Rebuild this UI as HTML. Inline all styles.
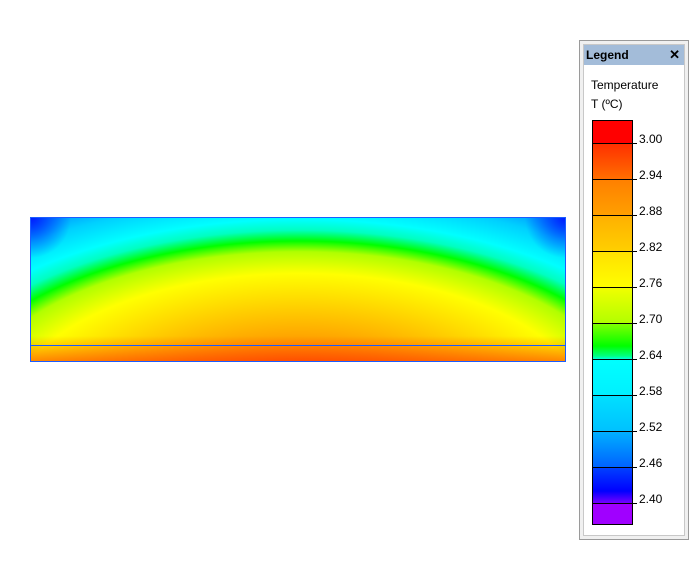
<!DOCTYPE html>
<html><head><style>
body{margin:0;width:694px;height:564px;background:#fff;position:relative;overflow:hidden;font-family:"Liberation Sans",sans-serif}
#plot{position:absolute;left:30px;top:217px;width:534px;height:143px;border:1px solid #1a5cff;
background:radial-gradient(circle 40px at 0 0,rgba(0,0,255,0.8),rgba(0,0,255,0)),radial-gradient(circle 40px at 534px 0,rgba(0,0,255,0.8),rgba(0,0,255,0)),linear-gradient(rgba(255,40,0,0) 0px,rgba(255,40,0,0) 118px,rgba(255,40,0,0.55) 143px),radial-gradient(ellipse 720px 360px at 268px 203px,#ff2000 0%,#ff5000 10%,#ff8800 18%,#ffb800 27%,#ffdc00 34%,#ffff00 41%,#b0ff00 47%,#00ff00 50%,#00ffc0 53%,#00ffff 56%,#00d0ff 62%,#0090ff 67%,#0020ff 72%,#2000ff 80%)}
#line{position:absolute;left:30px;top:345px;width:536px;height:1px;background:#1a5cff}
#panel{position:absolute;left:579px;top:40px;width:108px;height:498px;border:1px solid #9a9a9a;background:#f0f0f0}
#inner{position:absolute;left:3px;top:3px;width:100px;height:490px;background:#fff;border:1px solid #c8c8c8}
#title{position:absolute;left:0;top:0;width:100px;height:20px;background:#a3bcd9;font-weight:bold;font-size:12px;line-height:20px;padding-left:2px;box-sizing:border-box}
#title span{position:absolute;right:4px;top:0;font-size:13px}
.t{position:absolute;left:7px;font-size:12px;color:#000}
#bar{position:absolute;left:592px;top:120px;width:39px;height:403px;border:1px solid #000;
background:linear-gradient(#ff0000 0px,#ff0000 23px,#ff3000 23px,#ff7000 59px,#ff8000 59px,#ffa000 95px,#ffb000 95px,#ffd000 131px,#ffe000 131px,#ffff00 167px,#f0ff00 167px,#b0ff00 203px,#80ff00 203px,#00ff00 225px,#00ff80 235px,#00ffff 239px,#00f0ff 275px,#00e0ff 275px,#00c0ff 311px,#00b0ff 311px,#0060ff 347px,#0040ff 347px,#0000ff 370px,#8000ff 383px,#a000ff 383px,#a000ff 403px)}
.k{position:absolute;left:593px;width:44px;height:1px;background:#000}
.v{position:absolute;left:639px;font-size:12px}
</style></head><body>
<div id="plot"></div><div id="line"></div>
<div id="panel"><div id="inner"><div id="title">Legend<span>✕</span></div>
<div class="t" style="top:33px">Temperature</div><div class="t" style="top:52px">T (ºC)</div></div></div>
<div id="bar"></div>
<div class="k" style="top:143px"></div><div class="v" style="top:132px">3.00</div>
<div class="k" style="top:179px"></div><div class="v" style="top:168px">2.94</div>
<div class="k" style="top:215px"></div><div class="v" style="top:204px">2.88</div>
<div class="k" style="top:251px"></div><div class="v" style="top:240px">2.82</div>
<div class="k" style="top:287px"></div><div class="v" style="top:276px">2.76</div>
<div class="k" style="top:323px"></div><div class="v" style="top:312px">2.70</div>
<div class="k" style="top:359px"></div><div class="v" style="top:348px">2.64</div>
<div class="k" style="top:395px"></div><div class="v" style="top:384px">2.58</div>
<div class="k" style="top:431px"></div><div class="v" style="top:420px">2.52</div>
<div class="k" style="top:467px"></div><div class="v" style="top:456px">2.46</div>
<div class="k" style="top:503px"></div><div class="v" style="top:492px">2.40</div>
</body></html>
